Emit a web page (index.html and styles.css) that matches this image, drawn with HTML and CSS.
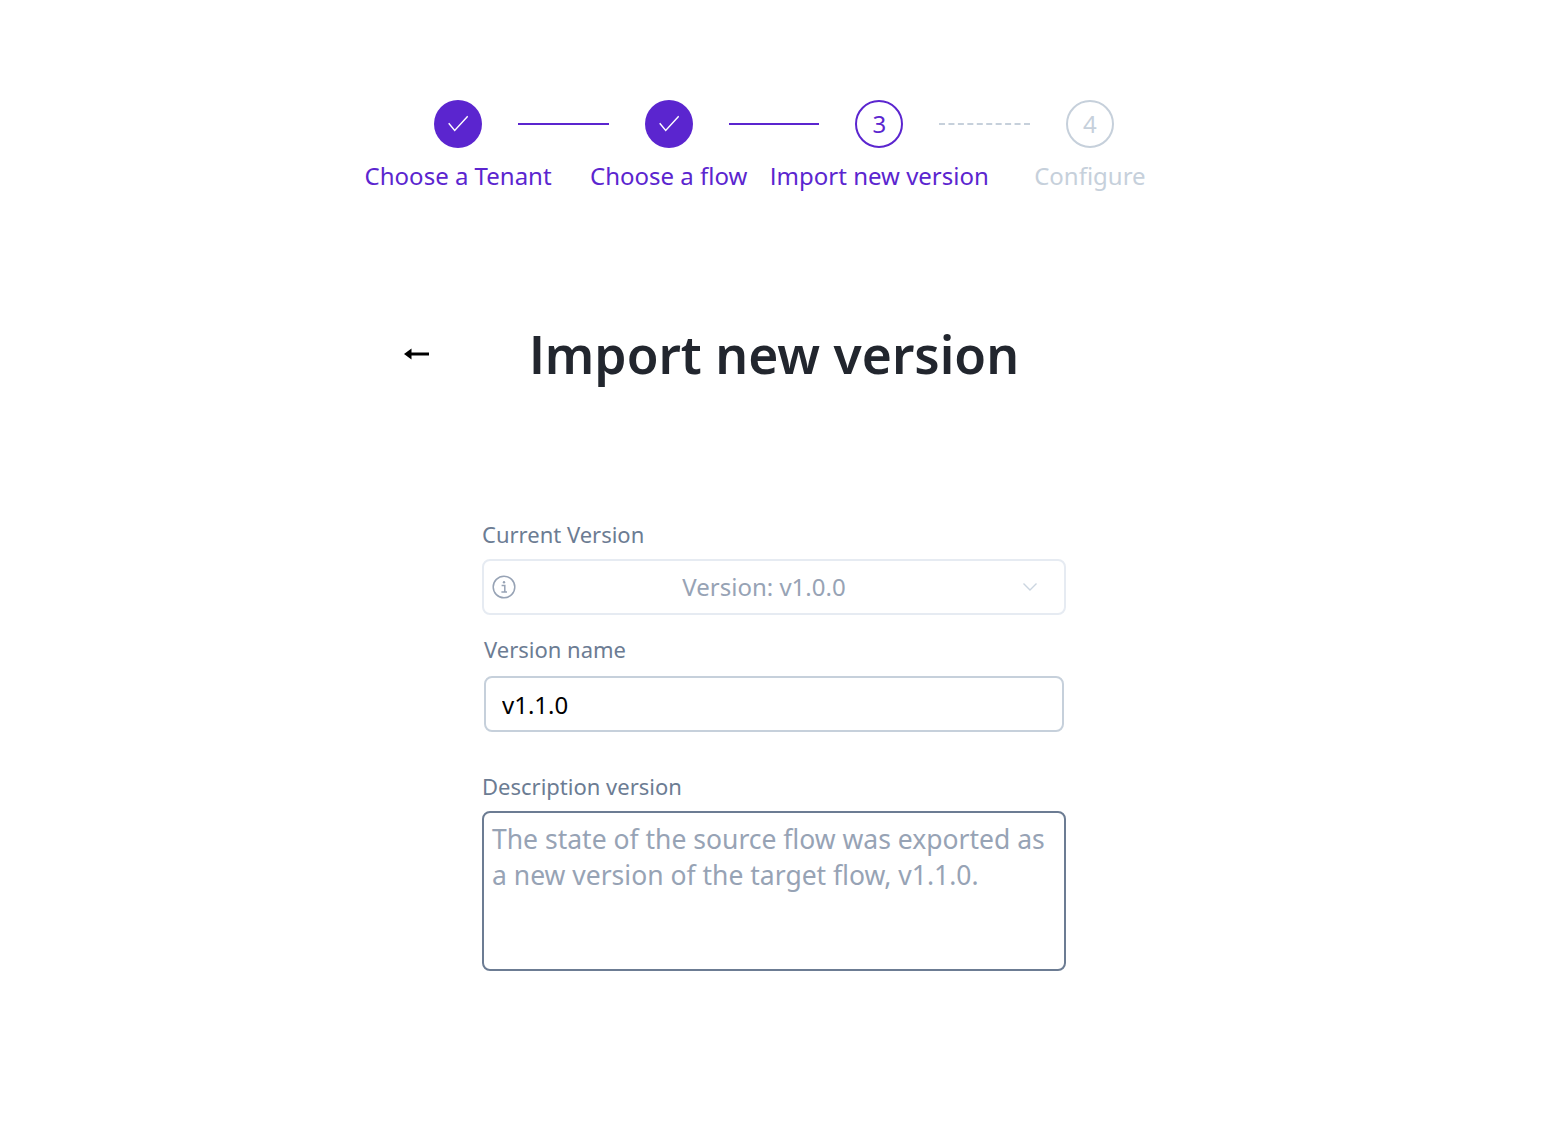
FILE: index.html
```html
<!DOCTYPE html>
<html lang="en">
<head>
<meta charset="UTF-8" />
<title>Import new version</title>
<link rel="stylesheet" href="styles.css">
</head>
<body>
<main class="page">

  <!-- stepper -->
  <ol class="stepper">
    <li class="step done">
      <div class="track">
        <span class="circle"><svg width="20" height="20" viewBox="0 0 20 20"><path d="M.7 9.2 L6.7 16.5 L19.7 2.2" fill="none" stroke="#fff" stroke-width="1.4"/></svg></span>
        <span class="line"></span>
      </div>
      <span class="step-label">Choose a Tenant</span>
    </li>
    <li class="step done">
      <div class="track">
        <span class="circle"><svg width="20" height="20" viewBox="0 0 20 20"><path d="M.7 9.2 L6.7 16.5 L19.7 2.2" fill="none" stroke="#fff" stroke-width="1.4"/></svg></span>
        <span class="line"></span>
      </div>
      <span class="step-label">Choose a flow</span>
    </li>
    <li class="step current">
      <div class="track">
        <span class="circle">3</span>
        <span class="line dashed"></span>
      </div>
      <span class="step-label">Import new version</span>
    </li>
    <li class="step todo">
      <div class="track">
        <span class="circle">4</span>
      </div>
      <span class="step-label">Configure</span>
    </li>
  </ol>

  <!-- title -->
  <div class="title-row">
    <a class="back" href="#" aria-label="Back">
      <svg width="26" height="12" viewBox="0 0 26 12"><path d="M6 6 H25" stroke="#000" stroke-width="3"/><path d="M0 6 L7.5 .5 V11.5 Z" fill="#000"/></svg>
    </a>
    <h1>Import new version</h1>
  </div>

  <!-- form -->
  <form class="form">
    <label class="field-label">Current Version</label>
    <div class="select-box">
      <svg class="info" width="24" height="24" viewBox="0 0 24 24"><circle cx="12" cy="12" r="10.8" fill="none" stroke="#97a3b5" stroke-width="1.5"/><circle cx="12" cy="7.2" r="1.2" fill="#97a3b5"/><path d="M9.6 10.4 H12.8 V16.6 M9.4 17 H15" fill="none" stroke="#97a3b5" stroke-width="1.5"/></svg>
      <span class="select-value">Version: v1.0.0</span>
      <svg class="chevron" width="16" height="10" viewBox="0 0 16 10"><path d="M1.5 1.5 L8 8 L14.5 1.5" fill="none" stroke="#cbd5e0" stroke-width="1.4"/></svg>
    </div>

    <label class="field-label indent" for="vname">Version name</label>
    <input id="vname" class="text-input" type="text" value="v1.1.0">

    <label class="field-label desc" for="vdesc">Description version</label>
    <textarea id="vdesc" class="text-area" placeholder="The state of the source flow was exported as a new version of the target flow, v1.1.0."></textarea>
  </form>

</main>
</body>
</html>
```

FILE: styles.css
```css
/* core */
body{margin:0;background:#fff;font-family:'Noto Sans',sans-serif;font-feature-settings:"ss04";}
.page{width:1548px;height:1137px;padding-top:100px;box-sizing:border-box;}

/* stepper */
.stepper{display:grid;grid-template-columns:repeat(4,210.6px);justify-content:center;list-style:none;margin:0;padding:0;}
.step{display:flex;flex-direction:column;align-items:center;color:#5b25cf;}
.track{position:relative;}
.circle{display:flex;align-items:center;justify-content:center;width:48px;height:48px;box-sizing:border-box;border-radius:50%;font-size:24px;}
.line{position:absolute;left:84px;top:23px;width:90.5px;height:2px;background:#5b25cf;}
.line.dashed{height:0;background:none;border-top:2px dashed #c6d0db;}
.step-label{margin-top:10px;font-size:24px;line-height:36px;white-space:nowrap;}
.done .circle{background:#5b25cf;}
.current .circle{border:2px solid #5b25cf;padding-bottom:2px;}
.todo{color:#c6d0db;}
.todo .circle{border:2px solid #c6d0db;padding-bottom:2px;}

/* title */
.title-row{display:grid;grid-template-columns:1fr auto 1fr;align-items:center;width:740px;margin:124px auto 0;}
.back{display:flex;}
h1{margin:0;font-size:51.6px;line-height:72px;font-weight:600;color:#22262e;}

/* form */
.form{display:flex;flex-direction:column;width:584px;margin:128px auto 0;}
.field-label{font-size:22px;line-height:32px;color:#6c7c93;margin-bottom:9px;}
.field-label.indent{margin:18px 0 11px 2px;}
.field-label.desc{margin:38px 0 9px;}
.select-box{display:flex;align-items:center;height:56px;box-sizing:border-box;padding:0 26px 0 8px;border:2px solid #e6ebf2;border-radius:8px;}
.select-value{flex:1;margin:0 10px 2px 0;text-align:center;font-size:24px;color:#97a3b5;}
.text-input{width:580px;height:56px;box-sizing:border-box;margin:0 2px;padding:0 16px;border:2px solid #c6d0db;border-radius:8px;font:24px 'Noto Sans',sans-serif;font-feature-settings:inherit;color:#000;outline:none;}
.text-area{width:584px;height:160px;box-sizing:border-box;margin:0;padding:8px;border:2px solid #6c7c93;border-radius:8px;font:26.5px/36px 'Noto Sans',sans-serif;font-feature-settings:inherit;resize:none;outline:none;}
.text-area::placeholder{color:#97a3b5;opacity:1;}
```
